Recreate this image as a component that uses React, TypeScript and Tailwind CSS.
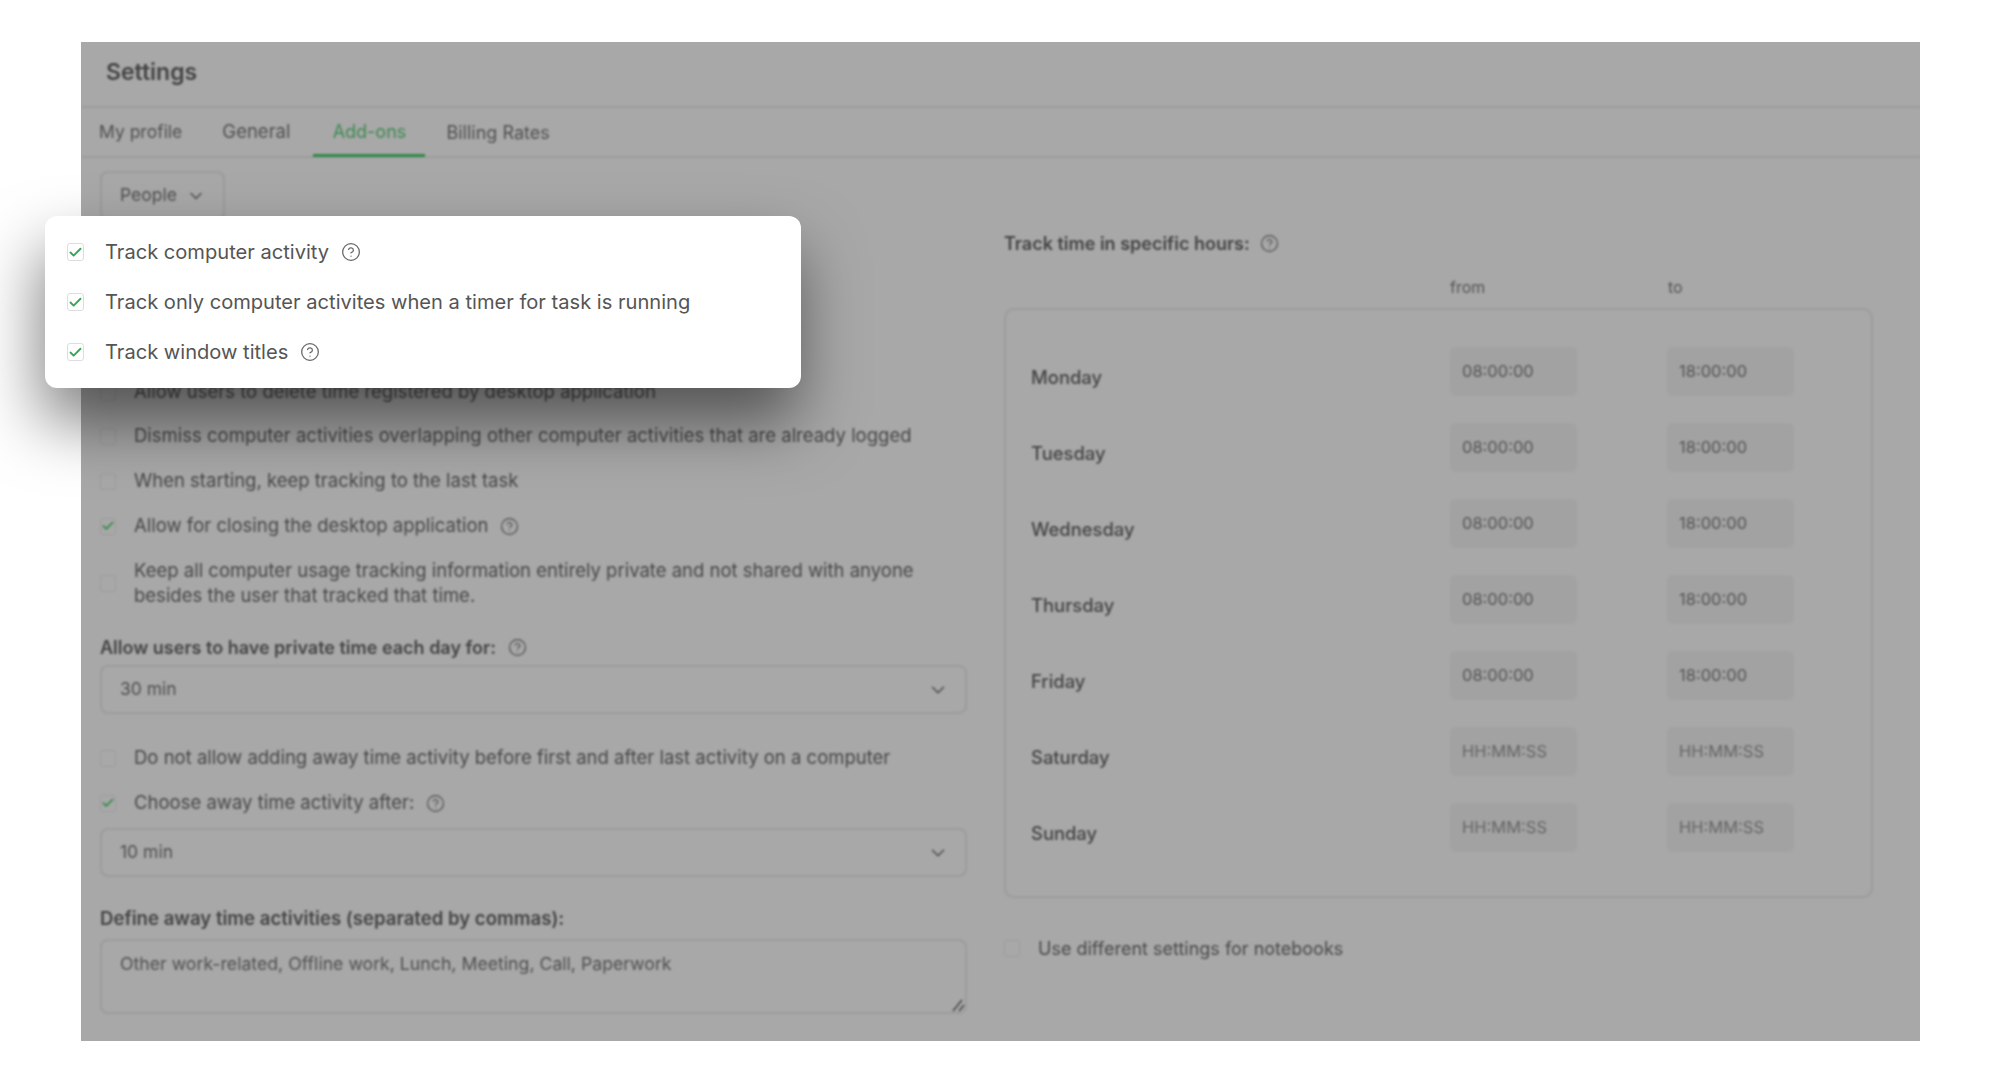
import { Check, ChevronDown, CircleHelp } from 'lucide-react';

const HOURS = [
  { day: 'Monday', from: '08:00:00', to: '18:00:00' },
  { day: 'Tuesday', from: '08:00:00', to: '18:00:00' },
  { day: 'Wednesday', from: '08:00:00', to: '18:00:00' },
  { day: 'Thursday', from: '08:00:00', to: '18:00:00' },
  { day: 'Friday', from: '08:00:00', to: '18:00:00' },
  { day: 'Saturday', from: '', to: '' },
  { day: 'Sunday', from: '', to: '' },
];

function Box({ checked }: { checked?: boolean }) {
  return (
    <span className="w-[16px] h-[17px] shrink-0 rounded-[3px] border border-[#9c9c9c] flex items-center justify-center">
      {checked && <Check size={14} strokeWidth={3} className="text-[#2f8a45]" />}
    </span>
  );
}

function Row({ checked, help, children, className }: { checked?: boolean; help?: boolean; children: string; className?: string }) {
  return (
    <div className={`flex items-center h-[30px] ${className ?? ''}`}>
      <Box checked={checked} />
      <span className="ml-[18px] text-[18.5px] text-[#484848]">{children}</span>
      {help && <CircleHelp size={19} strokeWidth={1.5} className="ml-[12px] text-[#505050]" />}
    </div>
  );
}

function Select({ value, className }: { value: string; className?: string }) {
  return (
    <div className={`h-[49px] pl-[18px] pr-[16px] flex items-center justify-between rounded-[8px] border-2 border-[#9c9c9c] ${className ?? ''}`}>
      <span className="text-[17.5px] text-[#505050]">{value}</span>
      <ChevronDown size={22} strokeWidth={1.75} className="text-[#505050]" />
    </div>
  );
}

function TimeInput({ value, className }: { value: string; className?: string }) {
  return (
    <input
      readOnly
      value={value}
      placeholder="HH:MM:SS"
      className={`w-[127px] h-[49px] px-[12px] pb-[2px] rounded-[6px] bg-[#a2a2a2] text-[16.5px] text-[#555555] placeholder:text-[#666666] outline-none ${className ?? ''}`}
    />
  );
}

function PopupRow({ label, help }: { label: string; help?: boolean }) {
  return (
    <div className="flex items-center h-[30px]">
      <span className="w-[17px] h-[18px] shrink-0 rounded-[3px] border border-[#dddddd] flex items-center justify-center">
        <Check size={15} strokeWidth={3} className="text-[#3aa35a]" />
      </span>
      <span className="ml-[21px] text-[20.1px] text-[#555555]">{label}</span>
      {help && <CircleHelp size={20} strokeWidth={1.5} className="ml-[12px] text-[#666666]" />}
    </div>
  );
}

export default function App() {
  return (
    <div className="relative w-[2000px] h-[1083px] bg-white overflow-hidden font-['Inter',sans-serif]">
      <div className="ml-[81px] pt-[42px] w-[1839px]">
        <div className="h-[999px] bg-[#a8a8a8] overflow-hidden">
          <div className="blur-[1px]">
            {/* Title */}
            <div className="h-[66px] pl-[25px] flex items-center border-b-2 border-[#9c9c9c]">
              <h1 className="text-[23px] font-semibold text-[#444444] pb-[4px]">Settings</h1>
            </div>

            {/* Tabs */}
            <div className="h-[50px] pl-[18px] flex items-center border-b-2 border-[#9c9c9c] text-[18px] text-[#505050]">
              <span className="text-[17.5px]">My profile</span>
              <span className="ml-[40px] text-[18.5px]">General</span>
              <span className="ml-[23px] w-[112px] h-full flex items-center justify-center text-[#3d8a50] border-b-[3px] border-[#2f8a45] translate-y-[1px]">Add-ons</span>
              <span className="ml-[21px]">Billing Rates</span>
            </div>

            {/* Section picker */}
            <div className="pl-[19px] pt-[13px]">
              <div className="w-[125px] h-[49px] pl-[18px] flex items-center gap-[9px] rounded-[8px] border-2 border-[#9c9c9c] text-[17.5px] text-[#505050]">
                <span>People</span>
                <ChevronDown size={20} strokeWidth={1.75} />
              </div>
            </div>

            <div className="grid grid-cols-[867px_869px] gap-x-[37px] pl-[19px] pt-[11px]">
              {/* Left column */}
              <div className="flex flex-col pt-[146px]">
                <Row>Allow users to delete time registered by desktop application</Row>
                <Row className="mt-[14px]">Dismiss computer activities overlapping other computer activities that are already logged</Row>
                <Row className="mt-[15px]">When starting, keep tracking to the last task</Row>
                <Row checked help className="mt-[15px]">Allow for closing the desktop application</Row>
                <div className="mt-[17px] flex items-center">
                  <Box />
                  <p className="ml-[18px] text-[18.5px] leading-[25px] text-[#484848]">
                    Keep all computer usage tracking information entirely private and not shared with anyone
                    <br />
                    besides the user that tracked that time.
                  </p>
                </div>
                <div className="mt-[24px] h-[30px] flex items-center">
                  <span className="text-[18px] font-semibold text-[#444444]">Allow users to have private time each day for:</span>
                  <CircleHelp size={19} strokeWidth={1.5} className="ml-[12px] text-[#505050]" />
                </div>
                <Select value="30 min" className="mt-[3px]" />
                <Row className="mt-[29px]">Do not allow adding away time activity before first and after last activity on a computer</Row>
                <Row checked help className="mt-[15px]">Choose away time activity after:</Row>
                <Select value="10 min" className="mt-[10px]" />
                <div className="mt-[27px] h-[30px] flex items-center text-[18.6px] font-semibold text-[#444444]">
                  Define away time activities (separated by commas):
                </div>
                <div className="relative mt-[5px] h-[75px]">
                  <textarea
                    readOnly
                    defaultValue="Other work-related, Offline work, Lunch, Meeting, Call, Paperwork"
                    className="block w-full h-full pl-[18px] pr-[20px] py-[10px] rounded-[8px] border-2 border-[#9c9c9c] text-[17.7px] text-[#505050] outline-none resize-none"
                  />
                  <svg viewBox="0 0 14 14" className="absolute right-[2px] bottom-[2px] w-[14px] h-[14px] text-[#444444]" fill="none" stroke="currentColor" strokeWidth="1.5">
                    <path d="M2 13 11 2" />
                    <path d="M8 13 13 7" />
                  </svg>
                </div>
              </div>

              {/* Right column */}
              <div className="flex flex-col">
                <div className="h-[24px] flex items-center">
                  <span className="text-[18px] font-semibold text-[#444444]">Track time in specific hours:</span>
                  <CircleHelp size={19} strokeWidth={1.5} className="ml-[10px] text-[#505050]" />
                </div>
                <div className="mt-[20px] flex text-[16px] text-[#555555]">
                  <span className="ml-[446px] w-[218px]">from</span>
                  <span>to</span>
                </div>
                <div className="mt-[9px] h-[590px] pt-[37px] pl-[25px] rounded-[10px] border-2 border-[#9c9c9c] flex flex-col gap-[27px]">
                  {HOURS.map((row) => (
                    <div key={row.day} className="flex items-start">
                      <span className="w-[419px] pt-[17px] text-[18.4px] font-medium text-[#444444]">{row.day}</span>
                      <TimeInput value={row.from} />
                      <TimeInput value={row.to} className="ml-[90px]" />
                    </div>
                  ))}
                </div>
                <div className="mt-[35px] flex items-center h-[30px]">
                  <Box />
                  <span className="ml-[18px] text-[18px] text-[#484848]">Use different settings for notebooks</span>
                </div>
              </div>
            </div>
          </div>
        </div>
      </div>

      {/* Highlighted card */}
      <div className="absolute left-[45px] top-[216px] w-[756px] h-[172px] pl-[22px] flex flex-col justify-center gap-[20px] rounded-[12px] bg-white shadow-[-4px_34px_64px_rgba(0,0,0,0.5)]">
        <PopupRow label="Track computer activity" help />
        <PopupRow label="Track only computer activites when a timer for task is running" />
        <PopupRow label="Track window titles" help />
      </div>
    </div>
  );
}
